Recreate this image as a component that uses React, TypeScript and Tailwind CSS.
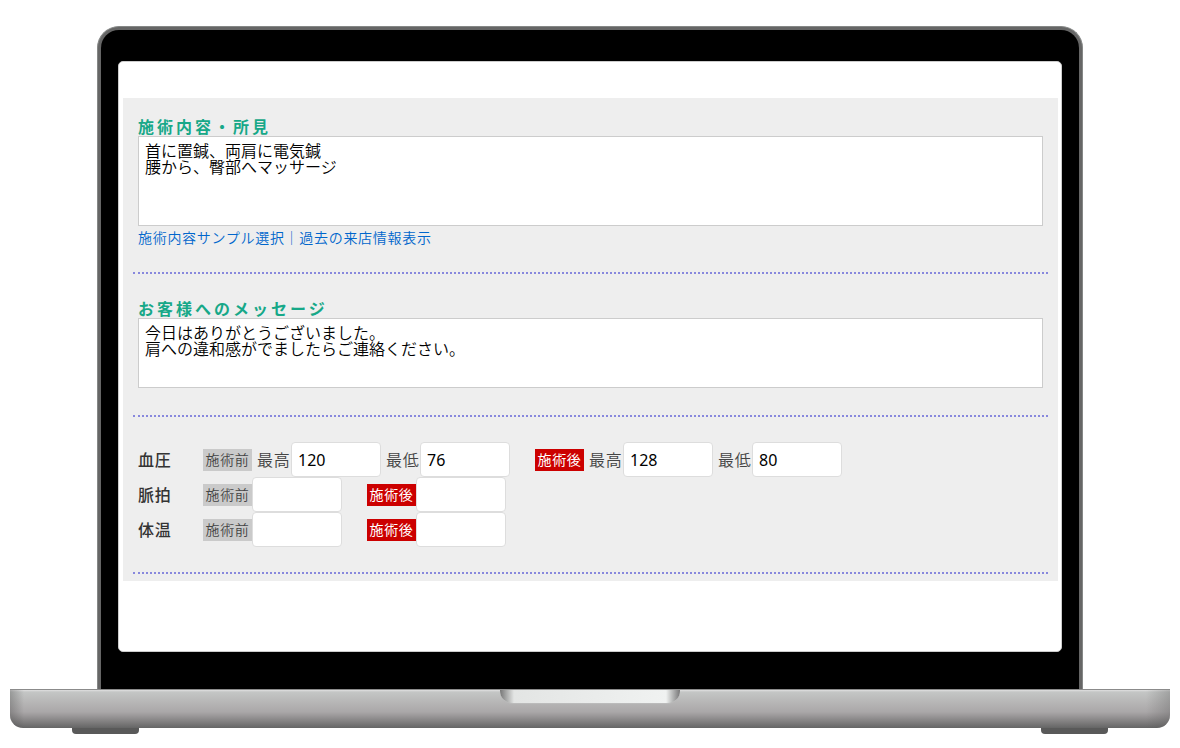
import type { ReactNode } from "react";

type TimingTagProps = { tone: "before" | "after" };

function TimingTag({ tone }: TimingTagProps) {
  return tone === "before" ? (
    <span className="flex h-[22px] w-[49px] items-center justify-center bg-[#cacaca] text-sm font-[350] tracking-wider whitespace-nowrap text-[#444444]">
      施術前
    </span>
  ) : (
    <span className="flex h-[22px] w-[49px] items-center justify-center bg-[#cc0000] text-sm tracking-wider whitespace-nowrap text-white">
      施術後
    </span>
  );
}

type ReadingProps = { name: string; label: string; caption?: string; value?: string };

function Reading({ name, label, caption, value = "" }: ReadingProps) {
  return (
    <span className="flex items-center">
      {caption && (
        <label htmlFor={name} className="ml-[5px] w-[34px] font-[350] tracking-wider whitespace-nowrap text-[#444444]">
          {caption}
        </label>
      )}
      <input
        id={name}
        name={name}
        aria-label={label}
        defaultValue={value}
        className="h-[35px] w-[90px] rounded-[4px] border border-[#dddddd] bg-white px-1.5 text-black outline-none"
      />
    </span>
  );
}

function VitalRow({ title, children }: { title: string; children: ReactNode }) {
  return (
    <div className="flex items-center">
      <h2 className="w-[65px] font-medium tracking-wider text-[#333333]">{title}</h2>
      <div className="flex items-center gap-[25px]">{children}</div>
    </div>
  );
}

function Section({ children }: { children: ReactNode }) {
  return (
    <section className="border-b-2 border-dotted border-[#8888dd] px-[5px] pb-[25px]">{children}</section>
  );
}

type NoteProps = { id: string; label: string; rows: string; text: string };

function Note({ id, label, rows, text }: NoteProps) {
  return (
    <div className="flex flex-col pb-0.5">
      <label htmlFor={id} className="h-[19px] font-bold leading-5 tracking-[3px] text-[#17a888]">
        {label}
      </label>
      <textarea
        id={id}
        defaultValue={text}
        className={`${rows} w-full resize-none border border-[#cccccc] bg-white px-1.5 py-1.5 text-base font-[350] leading-4 text-black outline-none`}
      />
    </div>
  );
}

function TreatmentForm() {
  return (
    <form className="flex flex-col gap-[25px] bg-[#eeeeee] px-2.5 pt-[19px] pb-[7px]">
      <Section>
        <Note
          id="treatment"
          label="施術内容・所見"
          rows="h-[90px]"
          text={"首に置鍼、両肩に電気鍼\n腰から、臀部へマッサージ"}
        />
        <nav className="h-[19px] text-sm leading-5 font-[350] tracking-wider text-[#0066cc]">
          <a href="#samples">施術内容サンプル選択</a>｜<a href="#history">過去の来店情報表示</a>
        </nav>
      </Section>
      <Section>
        <Note
          id="message"
          label="お客様へのメッセージ"
          rows="h-[70px]"
          text={"今日はありがとうございました。\n肩への違和感がでましたらご連絡ください。"}
        />
      </Section>
      <Section>
        <VitalRow title="血圧">
          <div className="flex items-center">
            <TimingTag tone="before" />
            <Reading name="before-high" label="施術前 最高血圧" caption="最高" value="120" />
            <Reading name="before-low" label="施術前 最低血圧" caption="最低" value="76" />
          </div>
          <div className="flex items-center">
            <TimingTag tone="after" />
            <Reading name="after-high" label="施術後 最高血圧" caption="最高" value="128" />
            <Reading name="after-low" label="施術後 最低血圧" caption="最低" value="80" />
          </div>
        </VitalRow>
        <VitalRow title="脈拍">
          <div className="flex items-center">
            <TimingTag tone="before" />
            <Reading name="pulse-before" label="施術前 脈拍" />
          </div>
          <div className="flex items-center">
            <TimingTag tone="after" />
            <Reading name="pulse-after" label="施術後 脈拍" />
          </div>
        </VitalRow>
        <VitalRow title="体温">
          <div className="flex items-center">
            <TimingTag tone="before" />
            <Reading name="temp-before" label="施術前 体温" />
          </div>
          <div className="flex items-center">
            <TimingTag tone="after" />
            <Reading name="temp-after" label="施術後 体温" />
          </div>
        </VitalRow>
      </Section>
    </form>
  );
}

function LaptopBase() {
  return (
    <div>
      <div className="flex h-[39px] items-start justify-center rounded-b-[13px] border-t border-[#8b8b8b] bg-[linear-gradient(90deg,rgba(70,70,70,0.35),transparent_14px,transparent_calc(100%-24px),rgba(80,80,80,0.3)),linear-gradient(180deg,#e0e0e0_0px,#c4c6c5_2px,#aaa7a8_22px,#9a9798_26px,#656565_38px)]">
        <div className="h-3.5 w-[180px] rounded-b-[13px] border-b border-[#bbbbbb] bg-[linear-gradient(90deg,#777777,#e3e5e4_14px,#f0f2f1_calc(100%-14px),#777777)]" />
      </div>
      <div className="flex justify-between px-[62px]">
        <div className="h-1.5 w-[67px] rounded-b-[4px] bg-[#595959]" />
        <div className="h-1.5 w-[67px] rounded-b-[4px] bg-[#595959]" />
      </div>
    </div>
  );
}

export default function App() {
  return (
    <main className="bg-white px-2.5 pt-[26px] pb-3.5 font-['Noto_Sans','Noto_Sans_CJK_JP',sans-serif] text-base text-[#444444]">
      <div className="mx-[87px] rounded-t-[22px] border-x border-t border-[#858786] bg-[#666666] px-[3px] pt-[3px]">
        <div className="rounded-t-[18px] bg-black px-[17px] pt-[31px] pb-[37px]">
          <div className="rounded-[5px] border border-[#cccccc] bg-white pt-9 pr-[3px] pb-[70px] pl-1">
            <TreatmentForm />
          </div>
        </div>
      </div>
      <LaptopBase />
    </main>
  );
}
